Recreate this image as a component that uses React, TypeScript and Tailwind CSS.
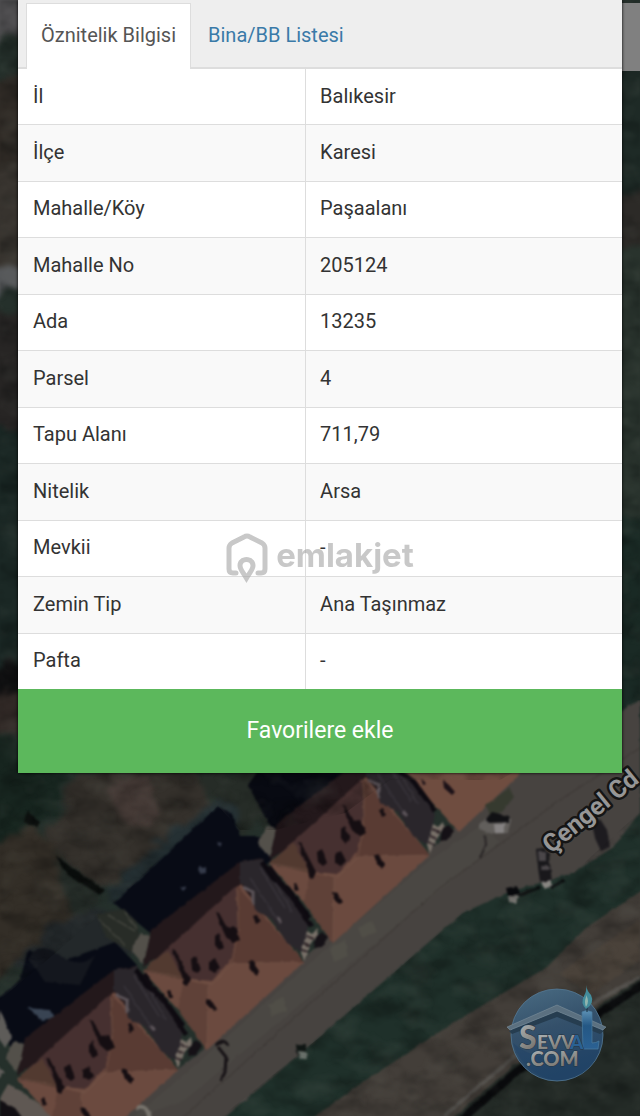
import React from "react";

const rows: [string, string][] = [
  ["İl", "Balıkesir"],
  ["İlçe", "Karesi"],
  ["Mahalle/Köy", "Paşaalanı"],
  ["Mahalle No", "205124"],
  ["Ada", "13235"],
  ["Parsel", "4"],
  ["Tapu Alanı", "711,79"],
  ["Nitelik", "Arsa"],
  ["Mevkii", "-"],
  ["Zemin Tip", "Ana Taşınmaz"],
  ["Pafta", "-"],
];

/* One roof of the housing row, drawn around its own spot on the map. */
function House({ x, y }: { x: number; y: number }) {
  return (
    <g transform={`translate(${x} ${y})`}>
      <path d="M143 967 L151 930 L240 862 L262 858 L300 905 L246 902 Z" fill="#23181b" />
      <path d="M240 884 L304 962 L207 1050 L178 1010 L143 971 Z" fill="#6b4a3f" />
      <path d="M143 971 L236 886 L238 925 L232 958 L212 981 L190 979 Z" fill="#463030" />
      <path d="M143 970 L168 950 L184 980 Z" fill="#523a30" />
      <path d="M237 886 L304 962 L230 964 L238 930 Z" fill="#593b33" />
      <path d="M184 980 L208 985 L207 1050 L178 1010 Z" fill="#5f4138" />
      <path d="M143 970 L190 979 L212 984 L232 964 L304 962 M238 890 L238 930 L232 964 M208 984 L207 1048" stroke="#7a5b4e" strokeWidth="1" fill="none" opacity="0.5" />
      <path d="M240 862 L263 859 L272 876 L286 888 L309 921 L303 953 L287 943 L272 919 L254 910 L250 890 L240 883 Z" fill="#2a262b" />
      <path d="M260 868 L285 908 M266 866 L292 912 M250 878 L279 922" stroke="#353137" strokeWidth="2" fill="none" />
      <path d="M242 887 L253 892 L253 905 M277 918 L281 923" stroke="#5c5459" strokeWidth="3" fill="none" />
      <path d="M262 862 L273 878 L288 889 L309 918" stroke="#0d0a10" strokeWidth="5" fill="none" />
      <g fill="#150e12">
        <path d="M216 912 L219 913 L227 928 L235 927 L240 940 L233 943 L226 937 L222 928 Z" />
        <path d="M215 936 L219 933 L224 947 L219 950 L215 945 Z" />
        <path d="M191 959 L196 956 L201 970 L197 973 L192 969 Z" />
        <path d="M209 962 L215 958 L220 968 L215 973 L209 970 Z" />
        <path d="M172 949 L175 950 L190 979 L187 986 L183 984 L182 976 Z" />
        <path d="M248 962 L252 961 L259 971 L257 976 L251 971 Z" />
        <path d="M206 999 L211 1000 L217 1009 L214 1011 L208 1006 Z" />
        <path d="M253 916 L257 915 L260 922 L256 924 Z M167 991 L170 990 L173 997 L169 998 Z" />
      </g>
      <path d="M133 946 L141 933 L150 936 L146 954 L143 964 L132 951 Z" fill="#53504a" />
      <path d="M301 953 L307 931 L312 934 L317 929 L318 935 L312 943 L309 949 L304 960 Z" fill="#787068" />
      <path d="M306 936 L314 939 M304 943 L311 946 M302 950 L308 952" stroke="#302629" strokeWidth="2" />
      <path d="M314 948 L316 937 L322 932 L328 938 L321 947 Z" fill="#151116" />
    </g>
  );
}

function SatelliteMap() {
  return (
    <svg aria-hidden="true" viewBox="0 0 640 1116" preserveAspectRatio="xMidYMin slice" className="absolute inset-0 h-full w-full">
      <defs>
        <filter id="soft" x="0" y="0" width="100%" height="100%" colorInterpolationFilters="sRGB">
          <feTurbulence type="fractalNoise" baseFrequency="0.12" numOctaves="2" seed="4" />
          <feDisplacementMap in="SourceGraphic" scale="3" xChannelSelector="R" yChannelSelector="G" />
          <feGaussianBlur stdDeviation="0.9" />
        </filter>
        <filter id="rough" x="0" y="0" width="100%" height="100%" colorInterpolationFilters="sRGB">
          <feTurbulence type="fractalNoise" baseFrequency="0.045" numOctaves="4" seed="9" />
          <feDisplacementMap in="SourceGraphic" scale="30" xChannelSelector="R" yChannelSelector="G" />
          <feGaussianBlur stdDeviation="2.5" />
        </filter>
        <filter id="shade" x="0" y="0" width="100%" height="100%" colorInterpolationFilters="sRGB">
          <feTurbulence type="fractalNoise" baseFrequency="0.03 0.05" numOctaves="4" seed="7" />
          <feColorMatrix values="0 0 0 0 0  0 0 0 0 0.01  0 0 0 0 0.01  2.4 0 0 0 -1" />
          <feGaussianBlur stdDeviation="1" />
        </filter>
        <filter id="light" x="0" y="0" width="100%" height="100%" colorInterpolationFilters="sRGB">
          <feTurbulence type="fractalNoise" baseFrequency="0.03 0.05" numOctaves="4" seed="22" />
          <feColorMatrix values="0 0 0 0 0.5  0 0 0 0 0.52  0 0 0 0 0.48  2.4 0 0 0 -1.1" />
          <feGaussianBlur stdDeviation="1" />
        </filter>
        <clipPath id="wild">
          <path d="M0 0 H640 V700 L500 780 H390 L345 813 L275 830 L240 830 L218 806 L114 903 L0 1000 Z" />
          <path d="M222 1116 L320 1037 L420 950 L463 913 L573 873 L640 812 V1116 Z" />
        </clipPath>
      </defs>

      <rect width="640" height="1116" fill="#25302b" />
      <g filter="url(#rough)">
        <path d="M-20 -20 H30 V30 L-20 45 Z" fill="#504f51" />
        <path d="M-20 75 H30 V170 H-20 Z" fill="#302b26" />
        <path d="M-20 165 H30 V200 H-20 Z M-20 180 H30 V290 H-20 Z" fill="#38342f" />
        <path d="M-20 268 H30 V294 H-20 Z" fill="#56585a" />
        <path d="M-20 310 H30 V430 H-20 Z" fill="#272524" />
        <path d="M-20 430 H30 V670 H-20 Z" fill="#1b2825" />
        <path d="M-20 668 H30 V690 H-20 Z" fill="#101011" />
        <path d="M-20 690 H30 V735 H-20 Z" fill="#302825" />
        <path d="M610 70 H660 V190 H610 Z" fill="#1e2a26" />
        <path d="M610 190 H660 V245 H610 Z" fill="#2c2a27" />
        <path d="M610 245 H660 V520 H610 Z" fill="#29332d" />
        <path d="M610 520 H660 V720 H610 Z" fill="#1a2a25" />
        <path d="M-20 740 H80 L60 800 L30 835 L-20 850 Z" fill="#17251f" />
        <path d="M80 770 L200 760 L215 800 L165 850 L95 890 L45 840 Z" fill="#34302b" />
        <path d="M112 775 L142 777 L158 812 L142 832 L124 819 L108 790 Z" fill="#453a36" />
        <path d="M-10 845 L45 830 L70 890 L85 930 L30 950 L-10 990 Z" fill="#332e27" />
        <path d="M55 865 L105 890 L90 915 L60 900 Z" fill="#232a26" />
        <path d="M105 890 L190 815 L225 790 L240 835 L120 900 Z" fill="#253033" />
        <path d="M180 770 H260 L280 815 L245 835 L215 790 Z" fill="#262c27" />
        <path d="M20 950 L75 910 L120 915 L145 945 L90 970 L30 975 Z" fill="#23282a" />
      </g>

      <g filter="url(#soft)">
        <path d="M55 1120 L130 1105 L210 1045 L330 935 L430 850 L520 770 L640 700 V812 L614 847 L573 873 L507 893 L463 913 L420 950 L320 1037 L222 1120 Z" fill="#474340" />
        <path d="M210 1052 L330 945 L430 860 L480 826 L500 842 L330 980 L185 1100 L130 1120 Z" fill="#4b4944" opacity="0.8" />
        <path d="M358 928 L372 920 L377 932 L362 938 Z M330 948 L345 940 L348 956 L334 962 Z M268 1005 L284 996 L287 1010 L272 1016 Z" fill="#504e47" />
        <path d="M180 1120 L320 995 L440 888 L560 800 L640 748" stroke="#3b3633" strokeWidth="1" fill="none" />
        <path d="M222 1120 L320 1037 L420 950 L463 913 L507 893 L573 873 L614 847 L644 808 V893 L587 927 L547 967 L453 1023 L363 1087 L320 1120 Z" fill="#1f302a" />
        <path d="M310 1120 L363 1082 L453 1023 L547 967 L587 927 L644 889 V980 L603 1007 L513 1070 L455 1120 Z" fill="#433e39" />
        <path d="M560 973 L640 920 V960 L590 995 Z" fill="#4a423a" />
        <path d="M455 1116 L513 1066 L603 1003 L644 976 V1120 H455 Z" fill="#242b27" />
        <path d="M444 1116 L510 1060 L600 999 L640 977" stroke="#55524e" strokeWidth="4" fill="none" />
        <path d="M462 1119 L515 1073 L604 1010 L644 984" stroke="#0a0b0d" strokeWidth="8" fill="none" />
        <path d="M114 903 L218 806 L232 814 L240 836 L264 836 L272 861 L250 870 L215 895 L150 933 Z" fill="#080b15" />
        <path d="M248 785 L262 765 H390 L345 813 L289 850 L268 823 Z" fill="#080a12" />
        <path d="M-4 1000 L20 980 L28 950 L60 962 L115 942 L137 965 L120 980 L20 1062 L-4 1020 Z" fill="#080b15" />
        <path d="M28 958 Q40 940 60 955 T95 955 L80 985 L45 982 Z" fill="#14171e" />
        <path d="M27 1008 L50 1010 L54 1018 L42 1020 Z" fill="#394453" />
        <path d="M199 866 l7 1 v6 l-6 1 Z M180 887 l6 1 -3 3 Z M217 842 l5 1 -2 4 Z" fill="#343a49" />
        <path d="M96 914 L124 909 L137 922 L140 942 L131 952 L106 937 Z" fill="#282c27" />
        <path d="M99 920 L125 945 M108 915 L135 931 M125 912 L137 929" stroke="#41433c" strokeWidth="1.5" />
        <path d="M27 810 L40 822 L37 827 L24 822 Z M55 855 L75 870 L105 890 L100 895 L68 875 Z" fill="#0a0d0c" />
        <path d="M0 1010 L12 1038 L5 1047 L-4 1035 Z M10 1048 L24 1049 L20 1064 Z M-3 1065 L5 1073 L-3 1080 Z" fill="#5e5c59" />
        <path d="M8 1084 L20 1090 L60 1120 H0 V1098 Z" fill="#5f5853" />
        <path d="M0 1100 L15 1108 L24 1120 H0 Z" fill="#120f13" />
        <path d="M395 760 L540 750 L517 777 L459 832 L430 800 Z" fill="#6f4d40" />
        <House x={126} y={-107} />
        <House x={0} y={0} />
        <House x={-126} y={108} />
        <path d="M143 974 L154 990 L168 1006 L178 1022 L186 1034 M269 867 L280 883 L294 899 L304 915 L312 927" stroke="#0f0b11" strokeWidth="5" fill="none" />
        <path d="M443 780 l6 5 6 7 -3 3 -8 -7 Z M421 777 l5 7 -3 1 Z" fill="#1b1117" />
        <path d="M486 805 L509 788 L514 797 L502 812 L490 815 Z" fill="#363a2f" />
        <path d="M479 824 L490 815 L511 819 L508 833 L492 834 L479 829 Z" fill="#625f5c" />
        <path d="M486 819 L492 812 L509 816 L509 822 L488 823 Z" fill="#111114" />
        <path d="M494 824 h10 v9 h-9 Z" fill="#858282" />
        <path d="M485 835 L486 845 L480 858" stroke="#292526" strokeWidth="2" fill="none" />
        <path d="M536 850 L544 847 L549 854 L552 882 L540 882 Z" fill="#19181b" />
        <path d="M538 852 h8 v9 h-7 Z M541 866 h8 v4 h-7 Z" fill="#4a4649" />
        <path d="M541 882 L551 880 L553 887 L545 888 Z M508 895 l10 1 -2 7 -7 -1 Z" fill="#8a8783" />
        <path d="M506 888 L518 886 L520 896 L508 896 Z" fill="#08090c" />
        <path d="M592 823 L600 819 L607 830 L610 847 L601 851 L595 838 Z" fill="#1d1b1f" />
        <path d="M520 895 L540 887 M550 888 L565 880" stroke="#0b0e0f" strokeWidth="3" />
        <path d="M216 1045 Q224 1037 228 1046 M218 1047 L226 1057 L225 1072 L221 1081" stroke="#171316" strokeWidth="3" fill="none" />
        <path d="M296 1044 L306 1044 L306 1053 L297 1054 Z" fill="#101614" />
        <path d="M298 1051 l8 1 1 7 -7 1 Z" fill="#69706a" />
        <path d="M137 1108 Q146 1103 150 1118" stroke="#77736c" strokeWidth="4" fill="none" />
      </g>
      <g clipPath="url(#wild)">
        <rect width="640" height="1116" filter="url(#shade)" opacity="0.3" />
        <rect width="640" height="1116" filter="url(#light)" opacity="0.12" />
      </g>
      <rect x="618" y="3" width="22" height="68" fill="#808080" />
      <text
        transform="translate(551 854) rotate(-39)"
        className="font-['Roboto'] text-[25px] font-bold"
        fill="#969696"
        stroke="#151515"
        strokeWidth="5"
        strokeLinejoin="round"
        paintOrder="stroke"
      >
        Çengel Cd
      </text>
    </svg>
  );
}

function EmlakjetMark() {
  return (
    <div className="pointer-events-none absolute inset-x-0 top-[531px] flex items-center justify-center gap-2 text-[#a5a5a5] opacity-60">
      <svg aria-hidden="true" viewBox="0 0 42 52" className="h-[52px] w-[42px]" fill="none" stroke="currentColor" strokeLinecap="round" strokeLinejoin="round">
        <path d="M10 42 H7 Q3 42 3 38 V17 Q3 14 6 12 L18 6 Q21 4 24 6 L36 12 Q39 14 39 17 V38 Q39 42 35 42 H32" strokeWidth="5" />
        <path fill="currentColor" fillRule="evenodd" stroke="none" d="M20.500 26 C15.500 26 11.500 29.500 11.500 34.500 C11.500 39 16 44 20.500 52 C25 44 29.500 39 29.500 34.500 C29.500 29.500 25.500 26 20.500 26 Z M20.500 31 C23 31 24.500 32.500 24.500 34.700 C24.500 36.500 22.500 39.500 20.500 42.500 C18.500 39.500 16.500 36.500 16.500 34.700 C16.500 32.500 18 31 20.500 31 Z" />
      </svg>
      <span className="pb-1 font-['Inter',sans-serif] text-[33px] leading-10 font-bold">emlakjet</span>
    </div>
  );
}

function SevvalMark() {
  return (
    <svg role="img" aria-label="Sevval.com" viewBox="0 0 104 100" className="absolute right-8 bottom-8 h-[100px] w-[104px]">
      <defs>
        <linearGradient id="globe" x1="0" y1="0" x2="0.3" y2="1">
          <stop offset="0" stopColor="#4a6c83" />
          <stop offset="0.5" stopColor="#34506a" />
          <stop offset="1" stopColor="#234567" />
        </linearGradient>
        <linearGradient id="metal" x1="0" y1="0" x2="0.4" y2="1">
          <stop offset="0" stopColor="#b5bdc0" />
          <stop offset="1" stopColor="#77746f" />
        </linearGradient>
        <linearGradient id="candle" x1="0" y1="0" x2="0" y2="1">
          <stop offset="0" stopColor="#5d91b5" />
          <stop offset="0.4" stopColor="#245784" />
          <stop offset="1" stopColor="#2b6193" />
        </linearGradient>
      </defs>
      <circle cx="53" cy="51" r="46" fill="url(#globe)" stroke="#547994" strokeWidth="0.8" />
      <path d="M9 59 Q28 76 52 72 T96 61 Q90 94 54 96 Q20 92 9 59 Z" fill="#1d4267" opacity="0.4" />
      <path d="M5 47 L53 27 L100 47 L96 50 L53 33 L8 50 Z" fill="#263d50" />
      <path d="M3 43 L53 21 L102 43 L99 46 L53 27 L6 46 Z" fill="#5b7080" stroke="#8799a3" strokeWidth="0.5" />
      <path d="M78 28 Q82 25 88 28 V59 Q92 59 95 57 L94 65 H79 Z" fill="url(#candle)" stroke="#4b7c9f" strokeWidth="0.7" />
      <path d="M83 28 V22" stroke="#142d3e" strokeWidth="1" />
      <path d="M82 1 Q83 7 87 11 Q91 19 82 25 Q76 19 80 12 Q83 7 82 1 Z" fill="#438c9b" />
      <path d="M82 11 Q86 17 82 23 Q80 18 82 13 Z" fill="#91b5af" />
      <g className="font-['Lato',sans-serif] font-black" stroke="#263543" strokeWidth="1" paintOrder="stroke">
        <text x="15" y="65" fontSize="32" fill="url(#metal)">S</text>
        <text x="33" y="65" fontSize="19" fill="url(#metal)">EVV</text>
        <text x="66" y="65" fontSize="19" fill="#2b6193">A</text>
        <text x="22" y="82" fontSize="20" fill="url(#metal)">.COM</text>
      </g>
    </svg>
  );
}

export default function App() {
  return (
    <main className="relative min-h-screen overflow-hidden bg-[#25302b] font-['Roboto',sans-serif]">
      <SatelliteMap />
      <section className="relative mx-[18px] bg-white text-xl leading-7 text-[#333] shadow-[0_0_3px_#000]">
        <div role="tablist" className="flex items-end gap-0.5 border-b-2 border-[#ddd] bg-[#eee] px-2 pt-[3px]">
          <button role="tab" aria-selected="true" className="-mb-0.5 border border-b-0 border-[#ddd] bg-white px-3.5 pt-[17px] pb-5 whitespace-nowrap text-[#555]">
            Öznitelik Bilgisi
          </button>
          <button role="tab" aria-selected="false" className="border border-b-0 border-transparent px-3.5 pt-[17px] pb-[18px] whitespace-nowrap text-[#3a7aa8]">
            Bina/BB Listesi
          </button>
        </div>
        <table className="h-[620px] w-full table-fixed border-collapse">
          <colgroup>
            <col className="w-10/21" />
            <col />
          </colgroup>
          <tbody>
            {rows.map(([label, value]) => (
              <tr key={label} className="border-b border-[#ddd] last:border-b-0 even:bg-[#f9f9f9]">
                <th scope="row" className="border-r border-[#ddd] pr-3.5 pb-0.5 pl-[15px] text-left font-normal">{label}</th>
                <td className="px-3.5 pb-0.5">{value}</td>
              </tr>
            ))}
          </tbody>
        </table>
        <button className="block h-21 w-full bg-[#5cb85c] text-[23px] text-white">Favorilere ekle</button>
        <EmlakjetMark />
      </section>
      <SevvalMark />
    </main>
  );
}
